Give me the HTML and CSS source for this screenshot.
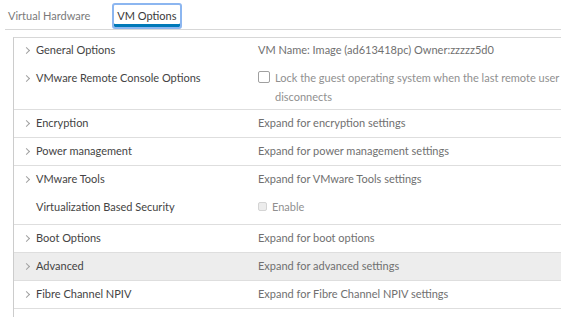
FILE: index.html
```html
<!DOCTYPE html>
<html lang="en">
<head>
    <meta charset="UTF-8">
    <meta name="viewport" content="width=device-width, initial-scale=1.0">
    <title>VM Options</title>

    <link rel="stylesheet" href="styles.css">
</head>
<body>
    <div class="tabs">
        <button type="button" class="tab">Virtual Hardware</button>
        <button type="button" class="tab active">VM Options</button>
    </div>

    <div class="stack">
        <div class="group">
            <div class="row first">
                <div class="label"><span class="caret"></span>General Options</div>
                <div class="value">VM Name: Image (ad613418pc) Owner:zzzzz5d0</div>
            </div>
            <div class="row wrap">
                <div class="label"><span class="caret"></span>VMware Remote Console Options</div>
                <div class="value check-line">
                    <span class="box"></span>
                    <span class="muted">Lock the guest operating system when the last remote user disconnects</span>
                </div>
            </div>
        </div>

        <div class="group">
            <div class="row">
                <div class="label"><span class="caret"></span>Encryption</div>
                <div class="value">Expand for encryption settings</div>
            </div>
        </div>

        <div class="group">
            <div class="row">
                <div class="label"><span class="caret"></span>Power management</div>
                <div class="value">Expand for power management settings</div>
            </div>
        </div>

        <div class="group">
            <div class="row inner">
                <div class="label"><span class="caret"></span>VMware Tools</div>
                <div class="value">Expand for VMware Tools settings</div>
            </div>
            <div class="row tall">
                <div class="label plain">Virtualization Based Security</div>
                <div class="value check-line">
                    <span class="box small"></span>
                    <span class="muted">Enable</span>
                </div>
            </div>
        </div>

        <div class="group">
            <div class="row">
                <div class="label"><span class="caret"></span>Boot Options</div>
                <div class="value">Expand for boot options</div>
            </div>
        </div>

        <div class="group hover">
            <div class="row">
                <div class="label"><span class="caret"></span>Advanced</div>
                <div class="value">Expand for advanced settings</div>
            </div>
        </div>

        <div class="group">
            <div class="row">
                <div class="label"><span class="caret"></span>Fibre Channel NPIV</div>
                <div class="value">Expand for Fibre Channel NPIV settings</div>
            </div>
        </div>

        <div class="group">
            <div class="row"></div>
        </div>
    </div>
</body>
</html>
```

FILE: styles.css
```css
* {
    margin: 0;
    padding: 0;
    box-sizing: border-box;
}

body {
    font-family: Lato, "Open Sans", sans-serif;
    font-size: 11px;
    color: #444;
    background: #fff;
    overflow: hidden;
    width: 561px;
    height: 317px;
}

.tabs {
    display: flex;
    gap: 17px;
    margin-left: 5px;
    padding: 3px 0 0 1px;
    border-bottom: 1px solid #d7d7d7;
}

.tab {
    font: inherit;
    font-size: 11px;
    background: none;
    border: 2px solid transparent;
    border-radius: 3px;
    padding: 0 3px;
    height: 26px;
    line-height: 22px;
    color: #7a7a7a;
    cursor: pointer;
}

.tab:first-child {
    padding-left: 0;
}

.tab.active {
    color: #3a3a3a;
    border-color: #8cb6f0;
    box-shadow: inset 0 -3px 0 #0079b8;
}

.stack {
    margin: 7px 0 0 13px;
    width: 600px;
    border-top: 1px solid #d7d7d7;
    border-left: 1px solid #ccc;
}

.group {
    border-bottom: 1px solid #dedede;
}

.group.hover {
    background: #ededed;
}

.row {
    display: flex;
    align-items: flex-start;
    padding: 3px 0 5px;
    min-height: 27px;
    line-height: 19px;
}

.row.first {
    padding: 2px 0 4px;
    min-height: 0;
}

.row.wrap {
    padding: 5px 0 3px;
}

.row.inner {
    min-height: 28px;
}

.row.tall {
    min-height: 30px;
}

.label {
    width: 244px;
    flex: none;
    display: flex;
    align-items: center;
    padding-left: 10px;
    color: #444;
}

.label.plain {
    padding-left: 22px;
}

.caret {
    width: 12px;
    height: 19px;
    flex: none;
    display: inline-block;
    position: relative;
}

.caret::after {
    content: "";
    position: absolute;
    left: 0;
    top: 8px;
    width: 4px;
    height: 4px;
    border-top: 1px solid #a0a0a0;
    border-right: 1px solid #a0a0a0;
    transform: rotate(45deg);
}

.value {
    width: 310px;
    color: #707070;
}

.check-line {
    display: flex;
    align-items: flex-start;
    gap: 5px;
}

.muted {
    color: #909090;
}

.box {
    flex: none;
    width: 12px;
    height: 12px;
    margin-top: 3px;
    border: 1px solid #a0a0a0;
    border-radius: 2px;
    background: #fff;
}

.box.small {
    width: 9px;
    height: 9px;
    margin-top: 5px;
    border-color: #d4d4d4;
    background: #ececec;
}
```
